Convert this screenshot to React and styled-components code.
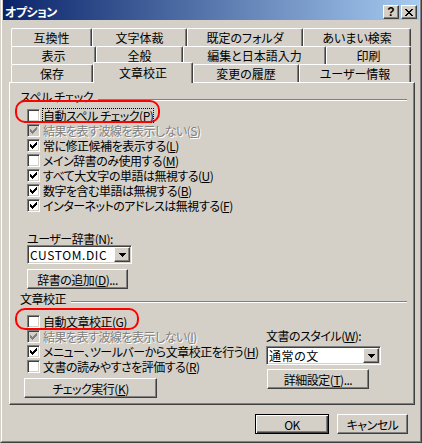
import React from "react";
import styled, { createGlobalStyle, css } from "styled-components";

const FACE = "#d4d0c8";

const GlobalStyle = createGlobalStyle`
  html, body {
    margin: 0;
    padding: 0;
    background: ${FACE};
  }
  body {
    font-family: "Noto Sans CJK JP", "Liberation Sans", sans-serif;
    font-size: 12px;
    color: #000;
    font-feature-settings: "palt";
    letter-spacing: -0.5px;
  }
  * {
    box-sizing: border-box;
  }
`;

const raised = css`
  border: 1px solid;
  border-color: #fff #404040 #404040 #fff;
  box-shadow: inset -1px -1px #808080;
  background: ${FACE};
`;

const sunken = css`
  border: 1px solid;
  border-color: #808080 #fff #fff #808080;
  box-shadow: inset 1px 1px #404040, inset -1px -1px ${FACE};
`;

const Window = styled.div`
  width: 422px;
  height: 443px;
  background: ${FACE};
  border-left: 1px solid ${FACE};
  border-right: 1px solid #404040;
  border-bottom: 1px solid #404040;
`;

const Frame = styled.div`
  height: 100%;
  border-left: 1px solid #fff;
  border-right: 1px solid #808080;
  border-bottom: 1px solid #808080;
  display: flex;
  flex-direction: column;
`;

const TitleBar = styled.div`
  height: 20px;
  margin: 0 1px;
  padding: 5px 2px 0 2px;
  background: linear-gradient(90deg, #0a246a 0%, #a6caf0 100%);
  display: flex;
  align-items: flex-start;
`;

const Title = styled.div`
  flex: 1;
  color: #fff;
  font-weight: 700;
  line-height: 13px;
`;

const CapButton = styled.div`
  ${raised};
  width: 16px;
  height: 14px;
  margin-left: 2px;
  display: flex;
  align-items: center;
  justify-content: center;
  font-family: "Liberation Sans", sans-serif;
  font-weight: 700;
  font-size: 12px;
  line-height: 12px;
  letter-spacing: 0;
`;

const Body = styled.div`
  flex: 1;
  display: flex;
  flex-direction: column;
  padding: 8px 5px 0 7px;
`;

const TabStrip = styled.div`
  margin-left: 2px;
  width: 400px;
  display: flex;
  flex-direction: column;
`;

const TabRow = styled.div`
  display: flex;
  height: 18px;
`;

const Tab = styled.div`
  flex: none;
  width: ${(p) => p.$w}px;
  height: 18px;
  background: ${FACE};
  border-left: 1px solid #fff;
  border-top: 1px solid #fff;
  border-right: 1px solid #404040;
  border-radius: 2px 2px 0 0;
  box-shadow: inset -1px 0 #808080;
  display: flex;
  justify-content: center;
  align-items: center;
  padding-top: 1px;
  line-height: 14px;
  white-space: nowrap;
  letter-spacing: 0;
  ${(p) =>
    p.$active &&
    css`
      position: relative;
      z-index: 2;
      height: 21px;
      margin-top: -2px;
      padding-bottom: 1px;
    `}
`;

const Panel = styled.div`
  width: 406px;
  height: 323px;
  border: 1px solid;
  border-color: #fff #404040 #404040 #fff;
  box-shadow: inset -1px -1px #808080;
  display: flex;
  flex-direction: column;
`;

const GroupHead = styled.div`
  display: flex;
  align-items: flex-start;
  height: 12px;
  line-height: 12px;
  margin: ${(p) => p.$top}px 0 0 10px;
  white-space: nowrap;
`;

const GroupLine = styled.div`
  flex: 1;
  height: 2px;
  margin: 8px 7px 0 5px;
  border-top: 1px solid #808080;
  border-bottom: 1px solid #fff;
`;

const Rows = styled.div`
  display: flex;
  flex-direction: column;
  margin-top: ${(p) => p.$top}px;
`;

const CheckRow = styled.div`
  position: relative;
  display: flex;
  align-items: center;
  height: 15px;
  padding-left: 17px;
  white-space: nowrap;
  line-height: 13px;
  ${(p) =>
    p.$disabled &&
    css`
      color: #808080;
      text-shadow: 1px 1px 0 #fff;
    `}
`;

const Box = styled.span`
  flex: none;
  width: 13px;
  height: 13px;
  margin-right: 3px;
  ${sunken};
  background: ${(p) => (p.$disabled ? FACE : "#fff")};
  display: flex;
  align-items: center;
  justify-content: center;
`;

const Caption = styled.span`
  ${(p) =>
    p.$focus &&
    css`
      outline: 1px dotted #000;
      outline-offset: 0;
    `}
`;

const Mark = styled.span`
  position: absolute;
  left: 5px;
  top: ${(p) => p.$top}px;
  width: ${(p) => p.$w}px;
  height: ${(p) => p.$h}px;
  border: 2px solid #ff0000;
  border-radius: 10px;
  pointer-events: none;
`;

const U = styled.span`
  text-decoration: underline;
  text-underline-offset: 1px;
`;

const FieldLabel = styled.div`
  height: 13px;
  line-height: 13px;
  margin: ${(p) => p.$top || 0}px 0 0 ${(p) => p.$left || 0}px;
  white-space: nowrap;
`;

const Combo = styled.div`
  ${sunken};
  background: #fff;
  width: ${(p) => p.$w}px;
  height: 19px;
  margin: ${(p) => p.$top || 0}px 0 0 ${(p) => p.$left || 0}px;
  padding: 1px;
  display: flex;
`;

const ComboText = styled.div`
  flex: 1;
  padding-left: 1px;
  line-height: 15px;
  letter-spacing: 0.6px;
  white-space: nowrap;
  overflow: hidden;
`;

const DropButton = styled.div`
  ${raised};
  width: 16px;
  display: flex;
  align-items: center;
  justify-content: center;
`;

const Button = styled.button`
  ${raised};
  width: ${(p) => p.$w}px;
  height: 20px;
  margin: ${(p) => p.$top || 0}px 0 0 ${(p) => p.$left || 0}px;
  padding: 0;
  font: inherit;
  letter-spacing: inherit;
  color: #000;
  display: flex;
  align-items: center;
  justify-content: center;
  white-space: nowrap;
  ${(p) =>
    p.$default &&
    css`
      border: 1px solid #000;
      box-shadow: inset 1px 1px #fff, inset -1px -1px #404040,
        inset -2px -2px #808080;
    `}
`;

const Split = styled.div`
  display: flex;
  margin-top: 9px;
`;

const LeftCol = styled.div`
  width: 256px;
  display: flex;
  flex-direction: column;
`;

const RightCol = styled.div`
  display: flex;
  flex-direction: column;
  padding-top: 15px;
`;

const Footer = styled.div`
  display: flex;
  justify-content: flex-end;
  gap: 8px;
  padding: 9px 7px 0 0;
`;

const CheckGlyph = ({ color }) => (
  <svg width="7" height="7" viewBox="0 0 7 7" shapeRendering="crispEdges">
    <path
      fill={color}
      d="M6 0h1v1h-1z M5 1h2v1h-2z M0 2h1v1h-1z M4 2h3v1h-3z M0 3h2v1h-2z M3 3h3v1h-3z M0 4h5v1h-5z M1 5h3v1h-3z M2 6h1v1h-1z"
    />
  </svg>
);

const Arrow = () => (
  <svg width="7" height="4" viewBox="0 0 7 4" shapeRendering="crispEdges">
    <path fill="#000" d="M0 0h7v1h-7z M1 1h5v1h-5z M2 2h3v1h-3z M3 3h1v1h-1z" />
  </svg>
);

const CloseGlyph = () => (
  <svg width="8" height="7" viewBox="0 0 8 7" shapeRendering="crispEdges">
    <path
      fill="#000"
      d="M0 0h2v1h-2z M6 0h2v1h-2z M1 1h2v1h-2z M5 1h2v1h-2z M2 2h4v1h-4z M3 3h2v1h-2z M2 4h4v1h-4z M1 5h2v1h-2z M5 5h2v1h-2z M0 6h2v1h-2z M6 6h2v1h-2z"
    />
  </svg>
);

const tabRows = [
  [
    ["互換性", 81],
    ["文字体裁", 95],
    ["既定のフォルダ", 116],
    ["あいまい検索", 108],
  ],
  [
    ["表示", 85],
    ["全般", 87],
    ["編集と日本語入力", 143],
    ["印刷", 85],
  ],
  [
    ["保存", 82],
    ["文章校正", 100, true],
    ["変更の履歴", 106],
    ["ユーザー情報", 112],
  ],
];

const spellRows = [
  { text: "自動スペル チェック", key: "P", checked: false, focus: true, mark: { top: -8, w: 145, h: 23 } },
  { text: "結果を表す波線を表示しない", key: "S", checked: true, disabled: true },
  { text: "常に修正候補を表示する", key: "L", checked: true },
  { text: "メイン辞書のみ使用する", key: "M", checked: false },
  { text: "すべて大文字の単語は無視する", key: "U", checked: true },
  { text: "数字を含む単語は無視する", key: "B", checked: true },
  { text: "インターネットのアドレスは無視する", key: "F", checked: true },
];

const grammarRows = [
  { text: "自動文章校正", key: "G", checked: false, mark: { top: -6, w: 124, h: 22 } },
  { text: "結果を表す波線を表示しない", key: "I", checked: true, disabled: true },
  { text: "メニュー、ツールバーから文章校正を行う", key: "H", checked: true },
  { text: "文書の読みやすさを評価する", key: "R", checked: false },
];

const Check = ({ row }) => (
  <CheckRow $disabled={row.disabled}>
    <Box $disabled={row.disabled}>
      {row.checked && <CheckGlyph color={row.disabled ? "#808080" : "#000"} />}
    </Box>
    <Caption $focus={row.focus}>
      {row.text}(<U>{row.key}</U>)
    </Caption>
    {row.mark && <Mark $top={row.mark.top} $w={row.mark.w} $h={row.mark.h} />}
  </CheckRow>
);

export default function App() {
  return (
    <>
      <GlobalStyle />
      <Window>
        <Frame>
          <TitleBar>
            <Title>オプション</Title>
            <CapButton>?</CapButton>
            <CapButton>
              <CloseGlyph />
            </CapButton>
          </TitleBar>
          <Body>
            <TabStrip>
              {tabRows.map((row, i) => (
                <TabRow key={i}>
                  {row.map(([label, w, active]) => (
                    <Tab key={label} $w={w} $active={active}>
                      {label}
                    </Tab>
                  ))}
                </TabRow>
              ))}
            </TabStrip>
            <Panel>
              <GroupHead $top={8}>
                スペル チェック
                <GroupLine />
              </GroupHead>
              <Rows $top={5}>
                {spellRows.map((r) => (
                  <Check key={r.text + r.key} row={r} />
                ))}
              </Rows>
              <FieldLabel $top={19} $left={17}>
                ユーザー辞書(<U>N</U>):
              </FieldLabel>
              <Combo $w={105} $left={17}>
                <ComboText>CUSTOM.DIC</ComboText>
                <DropButton>
                  <Arrow />
                </DropButton>
              </Combo>
              <Button $w={101} $top={5} $left={17}>
                辞書の追加(<U>D</U>)...
              </Button>
              <GroupHead $top={4}>
                文章校正
                <GroupLine />
              </GroupHead>
              <Split>
                <LeftCol>
                  {grammarRows.map((r) => (
                    <Check key={r.text + r.key} row={r} />
                  ))}
                  <Button $w={133} $top={4} $left={14}>
                    チェック実行(<U>K</U>)
                  </Button>
                </LeftCol>
                <RightCol>
                  <FieldLabel>
                    文書のスタイル(<U>W</U>):
                  </FieldLabel>
                  <Combo $w={115} $top={4}>
                    <ComboText>通常の文</ComboText>
                    <DropButton>
                      <Arrow />
                    </DropButton>
                  </Combo>
                  <Button $w={102} $top={4} $left={1}>
                    詳細設定(<U>T</U>)...
                  </Button>
                </RightCol>
              </Split>
            </Panel>
            <Footer>
              <Button $w={74} $default>
                OK
              </Button>
              <Button $w={71}>キャンセル</Button>
            </Footer>
          </Body>
        </Frame>
      </Window>
    </>
  );
}
